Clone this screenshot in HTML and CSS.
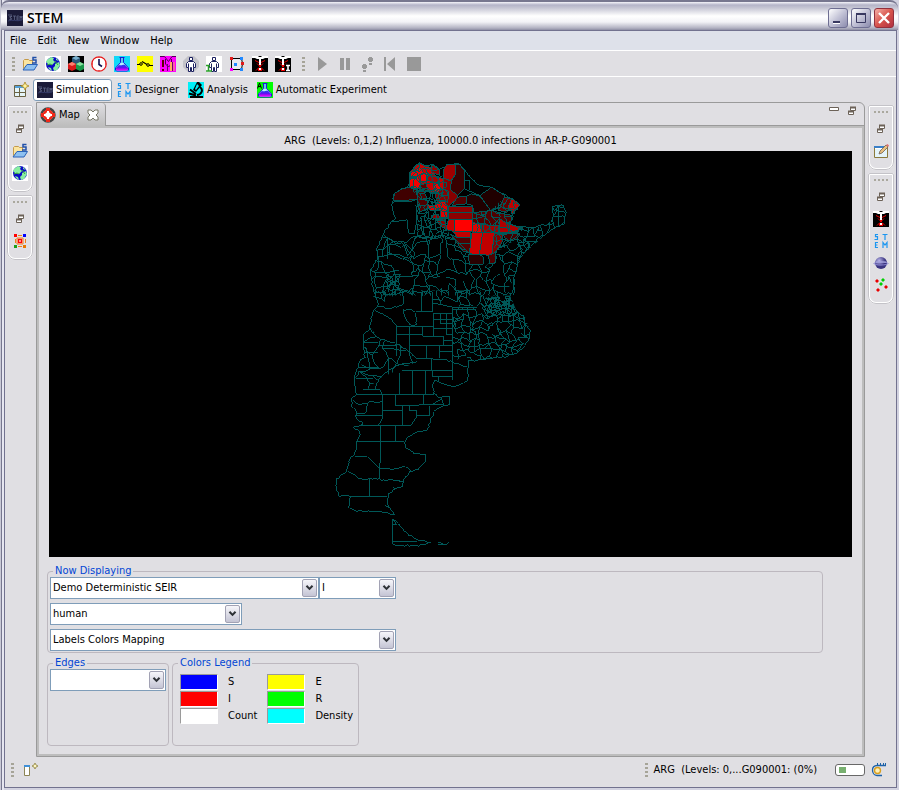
FILE: index.html
```html
<!DOCTYPE html>
<html lang="en">
<head>
<meta charset="utf-8">
<title>STEM</title>
<link rel="stylesheet" href="styles.css">
</head>
<body>
<svg class="defs" aria-hidden="true">
  <defs>
    <linearGradient id="flaskFill" x1="0" y1="0" x2="0" y2="1"><stop offset="0" stop-color="#2040f0"/><stop offset=".5" stop-color="#6010f0"/><stop offset="1" stop-color="#f0f"/></linearGradient>
    <radialGradient id="orb" cx=".35" cy=".3"><stop offset="0" stop-color="#b8b4e8"/><stop offset="1" stop-color="#3a3480"/></radialGradient>
    <symbol id="i-stem" viewBox="0 0 16 16"><rect width="16" height="16" fill="#1b1b38"/><path d="M1 5h4M2 7l3-1-2 2 2 1-3 1M6 6h3M7.500 6v4M10 6v4M10 6h2M10 8h2M10 10h2M13 10V6l1 2 1-2v4" stroke="#687090" stroke-width=".7" fill="none"/><path d="M1 11c4-2 9 1 14-1" stroke="#343a68" fill="none"/></symbol>
    <symbol id="i-open" viewBox="0 0 16 16"><path d="M1.500 12.500v-8l1-1h4l1 1h3v8z" fill="#fbe5a0" stroke="#c49a4a"/><path d="M1 14l4-5.500h10.500L12 14z" fill="#8dc0f0" stroke="#2a62b8"/><path d="M14.500 1.500h-3.500v2.500h3v3h-4" fill="none" stroke="#2050a8" stroke-width="1.500"/></symbol>
    <symbol id="i-globe" viewBox="0 0 16 16"><rect width="16" height="16" fill="#fff"/><circle cx="8" cy="8" r="7" fill="#0a0ac8"/><path d="M2 4l4-3 3 1-1 2 2 2-3 3-4-1-2-2zM10 8l4-2 1 3-3 5-3 1-1-3 2-2zM3 11l3 1 1 3-3-2zM11 2l3 3-3-1z" fill="#88eea0"/><path d="M2 9l3-1 2 1M10 5l3 4" stroke="#38a838" fill="none"/></symbol>
    <symbol id="i-cubes" viewBox="0 0 16 16"><rect width="16" height="16" fill="#000"/><path d="M8 0l4 2v5L8 8 4 6V2z" fill="#2b5678"/><path d="M8 0l4 2-4 2-4-2z" fill="#7ab0cc"/><path d="M4 6l4 2v5l-4 2-4-2V8z" fill="#d81818"/><path d="M4 6l4 2-4 2-4-2z" fill="#ff8070"/><path d="M12 6l4 2v5l-4 2-4-2V8z" fill="#189848"/><path d="M12 6l4 2-4 2-4-2z" fill="#88e0a0"/></symbol>
    <symbol id="i-clock" viewBox="0 0 16 16"><circle cx="8" cy="8" r="7.200" fill="#fff" stroke="#e81818" stroke-width="1.300"/><path d="M8 3v5.500l3 2" stroke="#101050" stroke-width="1.600" fill="none"/><path d="M8 1v1M8 14v1M1 8h1M14 8h1" stroke="#e81818"/></symbol>
    <symbol id="i-flaskshape" viewBox="0 0 16 16"><path d="M5.500 1.500h5M6.500 1v5.500l-5 5.500v2l1 1h11l1-1v-2l-5-5.500V1" fill="#b8f0ff" stroke="#1818d8"/><path d="M5 9c3 1 4-1 6 0l3 3v1.500l-1 1H3l-1-1V12z" fill="url(#flaskFill)"/><path d="M7 2h2v5H7z" fill="#60c8e8"/></symbol>
    <symbol id="i-flask" viewBox="0 0 16 16"><rect width="16" height="16" fill="#10d8f8"/><use href="#i-flaskshape"/></symbol>
    <symbol id="i-auto" viewBox="0 0 16 16"><rect width="16" height="16" fill="#0f0"/><use href="#i-flaskshape"/><path d="M0.500 6.500l2-5.500 2 5.500M1 4.500h3" stroke="#000" fill="none"/></symbol>
    <symbol id="i-switch" viewBox="0 0 16 16"><rect width="16" height="16" fill="#ff0"/><path d="M0 8.500h3M12 9.500h4M5 5.500l5 3" stroke="#000" stroke-width="1.200"/><circle cx="4" cy="8" r="1.300" fill="none" stroke="#000"/><circle cx="11" cy="9" r="1.300" fill="none" stroke="#000"/></symbol>
    <symbol id="i-modifier" viewBox="0 0 16 16"><rect width="16" height="16" fill="#f0f"/><path d="M0 .5h4.500l4 5 3.500-5h4M5.500 3v5l3 3 3-3V3" fill="none" stroke="#500050"/><path d="M2 4h2v7H2zM2 13h2v2H2z" fill="#600000"/><path d="M7.500 15V8M12.500 15V6" stroke="#700070"/><path d="M10 6h2v9h-2zM13.500 6h1v9h-1z" fill="#ffb060"/></symbol>
    <symbol id="i-manshape" viewBox="0 0 16 16"><path d="M6.500 1.500h3v3h-3zM5.500 5.500h5l2 2v4h-2v4h-2v-4h-1v4h-2v-4h-2v-4z" fill="#fff" stroke="#1c2060"/><path d="M5.500 7.500v4M10.500 7.500v4" stroke="#1c2060"/></symbol>
    <symbol id="i-man" viewBox="0 0 16 16"><path d="M5 0h6l5 5v6l-5 5H5l-5-5V5z" fill="#c3c3c9"/><use href="#i-manshape"/></symbol>
    <symbol id="i-maninf" viewBox="0 0 16 16"><rect width="16" height="16" fill="#fff"/><use href="#i-manshape"/><path d="M0 9.500h4M2.500 9v6M0 15h6" stroke="#28a028" stroke-width="1.500"/></symbol>
    <symbol id="i-graph" viewBox="0 0 16 16"><path d="M2.500 2.500h10l1 5-1 6h-10z" fill="#e8e8ee" stroke="#000"/><path d="M1 1h3v3H1zM12 6h3v3h-3z" fill="#e01818"/><path d="M11 1h3v3h-3zM5 7h3v3H5zM11 12h3v3h-3z" fill="#2088ff"/><path d="M1 12h3v3H1z" fill="#f0f"/></symbol>
    <symbol id="i-mosq" viewBox="0 0 16 16"><rect width="16" height="16" fill="#000"/><path d="M0 0h6l1 1h2l1-1h6v2h-3l-2 1H9v7H7V3H5L3 2H0z" fill="#fff"/><path d="M3 4.500l4 2M13 4.500l-4 2M5 7.500l3 3 3-3M4 14.500l3-3M12 14.500l-3-3" stroke="#e80000" fill="none"/><path d="M7 9h2v2H7zM6 12h4v3H6z" fill="#e80000"/><path d="M7 12h2v2H7z" fill="#fff"/></symbol>
    <symbol id="i-mosqi" viewBox="0 0 16 16"><use href="#i-mosq"/><path d="M10 8h6v8h-6z" fill="#000"/><path d="M11 9.500h4M13 9v6M11 14.500h4" stroke="#fff" stroke-width="1.600"/></symbol>
    <symbol id="i-letters" viewBox="0 0 16 16"><path d="M5 1.500H2.500v2.200h2v2.800H1.500M9.500 1.500h5M12 1.500v5.500M5 9.500H2.500v5H5M2.500 12h2M10 15V9.500l2 2.500 2-2.500V15" fill="none" stroke="#1c96f0" stroke-width="1.200"/></symbol>
    <symbol id="i-scope" viewBox="0 0 16 16"><rect width="16" height="16" fill="#00f0f8"/><path d="M9 0h2l3 3-6 7-3-2z" fill="#000"/><path d="M9 2l2 2-3 4-1-1z" fill="#00f0f8"/><path d="M12 5c4 3 1 8-3 8M2 7.500l6 4.500M1 11.500l7 2M2 15h13" stroke="#000" stroke-width="2" fill="none"/></symbol>
    <symbol id="i-persp" viewBox="0 0 16 16"><path d="M1.500 3.500h11v11h-11z" fill="#e4f4f8" stroke="#6b6344"/><path d="M2 5h10" stroke="#54a0d8" stroke-width="2"/><path d="M6.500 6v8M2 10.500h10" stroke="#6b6344"/><path d="M12 0l1.200 2.800L16 4l-2.800 1.200L12 8l-1.200-2.800L8 4l2.800-1.200z" fill="#fff4a0" stroke="#a88420" stroke-width=".8"/></symbol>
    <symbol id="i-restore" viewBox="0 0 10 10"><path d="M3.500 1.500h5v3h-5zM1.500 5.500h5v3h-5z" fill="#fff" stroke="#6c6258"/><path d="M3 1.500h6M1 5.500h6" stroke="#6c6258" stroke-width="2"/></symbol>
    <symbol id="i-target" viewBox="0 0 16 16"><circle cx="8" cy="8" r="6.500" fill="none" stroke="#444" stroke-width="2.400"/><circle cx="8" cy="8" r="5.400" fill="#f02818"/><path d="M6 1h4v3H6zM6 12h4v3H6zM1 6h3v4H1zM12 6h3v4h-3z" fill="#f02818"/><path d="M8 4v8M4 8h8" stroke="#fff" stroke-width="2"/><circle cx="8" cy="8" r="2.800" fill="#fff"/></symbol>
    <symbol id="i-nodes" viewBox="0 0 16 16"><path d="M6 2.500h4M6 13.500h4M3.500 6v4M13.500 6v4" stroke="#f08018"/><path d="M5 5h6v6H5z" fill="#fff" stroke="#f08018"/><path d="M6.500 6.500h3v3h-3z" fill="#fff" stroke="#f00" stroke-width="1.500"/><path d="M2 1h3v3H2z" fill="#f00"/><path d="M11 1h3v3h-3z" fill="#00f"/><path d="M2 12h3v3H2z" fill="#18a018"/><path d="M11 12h3v3h-3z" fill="#e87800"/></symbol>
    <symbol id="i-edit" viewBox="0 0 16 16"><path d="M1.500 3.500h13v11h-13z" fill="#fff" stroke="#8a7a3c"/><path d="M1 4h13" stroke="#3a80c8" stroke-width="2"/><path d="M2 6h12v8H2z" fill="#e4f4fa"/><path d="M6 11l1-3 6-6 2 2-6 6z" fill="#e8c080" stroke="#706050" stroke-width=".8"/><path d="M13 2l1.500-1L16 2.500 15 4z" fill="#e07070"/></symbol>
    <symbol id="i-planet" viewBox="0 0 16 16"><circle cx="8" cy="8" r="6" fill="url(#orb)"/><ellipse cx="8" cy="8.500" rx="7" ry="1.500" fill="none" stroke="#8884d0"/><path d="M3 7h10" stroke="#c0c0f0" stroke-width=".8"/></symbol>
    <symbol id="i-scatter" viewBox="0 0 16 16"><g fill="#e80000"><path d="M4 2l2 2-2 2-2-2zM13 8l2 2-2 2-2-2zM5 11l2 2-2 2-2-2z"/></g><path d="M10 1l2 2-2 2-2-2zM8 5l2 2-2 2-2-2z" fill="#00d000"/></symbol>
    <symbol id="i-fast" viewBox="0 0 16 16"><path d="M1.500 3.500h5v10h-5z" fill="#fff" stroke="#8c8454"/><path d="M1 4h6" stroke="#4090d8" stroke-width="2"/><path d="M12 1l1 2 2 1-2 1-1 2-1-2-2-1 2-1z" fill="#fff8c0" stroke="#8c8040" stroke-width=".8"/></symbol>
    <symbol id="i-job" viewBox="0 0 16 16"><path d="M15 3.500H6c-3 0-4.500 2-4.500 4.500S3 13.500 6 13.500h5" fill="none" stroke="#1d62a8" stroke-width="1.300"/><path d="M6.500 3V1M9.500 3V1M12.500 3V1M14.500 3V1" stroke="#1d62a8"/><circle cx="6.500" cy="8.500" r="3" fill="#fff0b8" stroke="#d8a020" stroke-width="1.400"/></symbol>
    <symbol id="i-chevron" viewBox="0 0 15 18"><path d="M4 6.500l3.500 3.500 3.500-3.500" fill="none" stroke="#2f3338" stroke-width="2.400"/></symbol>
  </defs>
</svg>

<div class="window">
  <header class="titlebar">
    <svg class="icon"><use href="#i-stem"/></svg>
    <h1>STEM</h1>
    <div class="window-buttons">
      <button type="button" class="wbtn" aria-label="Minimize"><svg viewBox="0 0 18 18"><path d="M4 12h7v3H4z" fill="#fff"/><path d="M4 12h7v2H4z" fill="#383860"/></svg></button>
      <button type="button" class="wbtn" aria-label="Maximize"><svg viewBox="0 0 18 18"><path d="M4.500 4.500h9v9h-9z" fill="none" stroke="#383860"/><path d="M4 5h10" stroke="#383860" stroke-width="2"/></svg></button>
      <button type="button" class="wbtn close" aria-label="Close"><svg viewBox="0 0 18 18"><path d="M4 4l10 10M14 4L4 14" stroke="#fff" stroke-width="2.400"/></svg></button>
    </div>
  </header>

  <div class="client">
    <nav class="menubar">
      <button type="button">File</button><button type="button">Edit</button><button type="button">New</button><button type="button">Window</button><button type="button">Help</button>
    </nav>

    <div class="toolbar">
      <i class="grip"></i>
      <button type="button" aria-label="Open scenario"><svg class="icon"><use href="#i-open"/></svg></button>
      <button type="button" aria-label="Model"><svg class="icon"><use href="#i-globe"/></svg></button>
      <button type="button" aria-label="Graph"><svg class="icon"><use href="#i-cubes"/></svg></button>
      <button type="button" aria-label="Sequencer"><svg class="icon"><use href="#i-clock"/></svg></button>
      <button type="button" aria-label="Experiment"><svg class="icon"><use href="#i-flask"/></svg></button>
      <button type="button" aria-label="Trigger"><svg class="icon"><use href="#i-switch"/></svg></button>
      <button type="button" aria-label="Modifier"><svg class="icon"><use href="#i-modifier"/></svg></button>
      <button type="button" aria-label="Population"><svg class="icon"><use href="#i-man"/></svg></button>
      <button type="button" aria-label="Population initializer"><svg class="icon"><use href="#i-maninf"/></svg></button>
      <button type="button" aria-label="Migration"><svg class="icon"><use href="#i-graph"/></svg></button>
      <button type="button" aria-label="Disease"><svg class="icon"><use href="#i-mosq"/></svg></button>
      <button type="button" aria-label="Infector"><svg class="icon"><use href="#i-mosqi"/></svg></button>
      <i class="grip second"></i>
      <button type="button" aria-label="Run" disabled><svg class="icon" viewBox="0 0 16 16"><path d="M4 1l9 7-9 7z" fill="#999"/></svg></button>
      <button type="button" aria-label="Pause" disabled><svg class="icon" viewBox="0 0 16 16"><path d="M3 2h4v12H3zM9 2h4v12H9z" fill="#999"/></svg></button>
      <button type="button" aria-label="Step" disabled><svg class="icon" viewBox="0 0 16 16"><path d="M3 8h3v1h1v3H6v1H3v-1H2V9h1zM3 14h3v2H3zM9 1h3v1h1v3h-1v1H9V5H8V2h1zM9 7h3v2H9z" fill="#999"/></svg></button>
      <button type="button" aria-label="Reset" disabled><svg class="icon" viewBox="0 0 16 16"><path d="M1 1h2v14H1zM12 1v14L4 8z" fill="#999"/></svg></button>
      <button type="button" aria-label="Stop" disabled><svg class="icon" viewBox="0 0 16 16"><path d="M1 1h14v14H1z" fill="#999"/></svg></button>
    </div>

    <div class="perspectives">
      <button type="button" class="open-persp" aria-label="Open perspective"><svg class="icon"><use href="#i-persp"/></svg></button>
      <button type="button" class="persp active"><svg class="icon"><use href="#i-stem"/></svg>Simulation</button>
      <button type="button" class="persp"><svg class="icon"><use href="#i-letters"/></svg>Designer</button>
      <button type="button" class="persp"><svg class="icon"><use href="#i-scope"/></svg>Analysis</button>
      <button type="button" class="persp"><svg class="icon"><use href="#i-auto"/></svg>Automatic Experiment</button>
    </div>

    <div class="workbench">
      <aside class="trim">
        <div class="stack">
          <i class="dots"></i>
          <button type="button" aria-label="Restore"><svg class="small"><use href="#i-restore"/></svg></button>
          <button type="button" aria-label="Scenarios"><svg class="icon"><use href="#i-open"/></svg></button>
          <button type="button" aria-label="Models"><svg class="icon"><use href="#i-globe"/></svg></button>
        </div>
        <div class="stack">
          <i class="dots"></i>
          <button type="button" aria-label="Restore"><svg class="small"><use href="#i-restore"/></svg></button>
          <button type="button" aria-label="Graphs"><svg class="icon"><use href="#i-nodes"/></svg></button>
        </div>
      </aside>

      <main class="view">
        <div class="tabs">
          <div class="tab"><svg class="icon"><use href="#i-target"/></svg><span>Map</span>
            <button type="button" aria-label="Close Map"><svg class="tab-close" viewBox="0 0 12 12"><path d="M1 1h3l2 2 2-2h3v3L9 6l2 2v3H8L6 9l-2 2H1V8l2-2-2-2z" fill="#fff" stroke="#777766"/></svg></button>
          </div>
          <div class="tab-tools">
            <button type="button" aria-label="Minimize view"><svg class="small" viewBox="0 0 10 10"><path d="M.5 1.500h9v3h-9z" fill="#fff" stroke="#6c6258"/></svg></button>
            <button type="button" aria-label="Restore view"><svg class="small"><use href="#i-restore"/></svg></button>
          </div>
        </div>
        <div class="view-body">
          <h2>ARG&nbsp; (Levels: 0,1,2) Influenza, 10000.0 infections in AR-P-G090001</h2>
          <div class="canvas">
            <svg viewBox="49 151 803 405" role="img" aria-label="Infection map of Argentina" shape-rendering="crispEdges">
              <defs>
                <clipPath id="north"><path d="M165 420L155 370 150 350 165 318 175 315 170 280 188 245 192 235 210 200 228 190 262 193 270 160 290 150 300 130 268 95 270 50 300 22 358 42 372 70 395 80 410 125 385 150 385 190 375 215 400 250 445 290 450 325 500 330 545 280 600 245 600 215 640 218 680 208 700 190 698 150 730 150 738 175 730 205 690 225 600 305 582 370 552 420z"/></clipPath>
                <clipPath id="northEast"><path d="M457 172L512 165 553 125 600 147 580 175 562 205 610 218 600 240 550 280 523 285 523 232 457 232z"/></clipPath>
                <clipPath id="centre"><path d="M120 60L552 60 540 105 370 108 308 95 300 65 270 80 240 60 200 70 145 105z"/></clipPath>
                <clipPath id="pampas"><path d="M368 110H440L470 80 540 75 560 122 585 140 600 180 598 205 560 248 480 265 415 272 368 265z"/></clipPath>
                <clipPath id="andes"><path d="M100 180L125 175 145 205 210 225 240 245 258 275 145 325 100 370 75 370 72 330 105 260z"/></clipPath>
              </defs>
              <g transform="translate(320 155) scale(.333333)">
                <g>
                  <path fill="#c80000" d="M268 95L270 50 285 32 300 22 318 32 340 38 345 60 370 70 375 100 355 118 320 105 300 100z"/>
                  <path fill="#f00000" d="M272 52L300 36 312 52 290 62 270 64z"/>
                  <path fill="#f00000" d="M268 95L268 68 295 64 302 84 294 100z"/>
                  <path fill="#f00000" d="M302 56L322 52 318 78 300 80z"/>
                  <path fill="#900000" d="M335 28L358 42 360 60 335 50z"/>
                  <path fill="#a80000" d="M325 55L345 58 360 78 340 82 322 72z"/>
                  <path fill="#600000" d="M300 88L318 84 325 105 305 108z"/>
                  <path fill="#f00000" d="M340 88L358 82 362 108 345 112z"/>
                  <path fill="#a00000" d="M372 40L380 27H405L408 55 392 75 370 68z"/>
                  <path fill="#380000" d="M405 27H418L433 45V100L412 120 390 100 395 75 408 55z"/>
                  <path fill="#880000" d="M370 68L395 77 390 100 412 120V130L385 152 350 138 345 115 372 98z"/>
                  <path fill="#400000" d="M222 115L245 100 265 95 290 103 292 132 270 138 220 135z"/>
                  <path fill="#500000" d="M292 105L310 105 320 125 325 160 300 168 292 150z"/>
                  <path fill="#e00000" d="M322 148L345 150 350 140 375 138 385 158 383 188 360 186 362 165 330 165z"/>
                  <path fill="#900000" d="M336 180L355 175 360 192 340 190z"/>
                  <path fill="#880000" d="M350 192L375 190 380 225 355 205z"/>
                  <path fill="#8c0000" d="M385 152H457V192H385z"/><path d="M385 172H457"/>
                  <path fill="#ff0000" d="M403 192H457V228H403z"/>
                  <path fill="#c80000" d="M385 192H403V228L378 222z"/>
                  <path fill="#c00000" d="M400 228H453V245H410z"/>
                  <path fill="#500000" d="M392 237L410 245H453L450 292 430 288z"/><path d="M410 265H450"/>
                  <path fill="#e00000" d="M457 200L480 205 485 232H457z"/>
                  <path fill="#a00000" d="M484 208H535V232H484z"/>
                  <path fill="#d00000" d="M455 232H488L478 297 448 295z"/>
                  <path fill="#c00000" d="M488 232H523L515 300 478 297z"/>
                  <path fill="#800000" d="M523 235H548V258L530 285 515 300z"/>
                  <path fill="#280000" d="M445 297L478 297 490 305 490 327H448z"/>
                  <path fill="#500000" d="M505 300L528 290V322L510 325z"/>
                  <path fill="#500000" d="M412 125L440 122V145L395 150z"/>
                  <path fill="#200000" d="M440 122L455 115 480 122 512 165 462 172 457 150 440 145z"/>
                  <path fill="#200000" d="M480 120L515 95 553 120 550 140 530 160 512 165z"/>
                  <path fill="#600000" d="M553 125L575 130 570 155 560 170 535 165z"/>
                  <path fill="#c00000" d="M565 155L575 128 600 147 578 175z"/>
                  <path fill="#500000" d="M457 172L512 165 575 180 575 195 545 210 484 208 457 200z"/>
                  <path fill="#b00000" d="M540 190L562 205 608 217 580 232 540 232z"/>
                  <path fill="#400000" d="M548 235H600L590 252 560 258z"/>
                </g>
                <path d="M433 45V75H450V103M433 100L480 120M218 140L295 130M210 200L262 193 265 232 283 235 290 200 288 150M203 245V310M203 290L245 310M457 150V232M392 237L445 290"/>
                <path class="coast" d="M165 420L155 370 150 350 165 318 175 315 170 280 188 245 192 235 210 200 228 190 218 175 217 140 222 115 245 100 265 95 268 75 270 50 285 32 300 22 315 30 340 28 358 42 372 35 380 27 418 27 435 45 450 65 480 90 515 95 540 110 575 130 600 147 580 175 575 195 562 205 600 215 640 215 680 208 700 190 698 150 730 150 738 175 730 205 690 225 660 245 640 265 600 305 590 340 582 370 582 420"/>
                <path class="coast" d="M600 215L590 245 560 260 530 285 528 320 505 340"/>
                <path class="coast" d="M192 240L230 265 250 262 262 300 290 262 330 255 360 240 400 250"/>
                <path class="mesh" clip-path="url(#north)" data-box="145 250 620 425" data-step="24"/>
                <path class="mesh" clip-path="url(#north)" data-box="290 100 385 240" data-step="12"/>
                <path class="mesh" clip-path="url(#north)" data-box="265 20 375 100" data-step="19"/>
                <path class="mesh" clip-path="url(#north)" data-box="600 140 750 310" data-step="17"/>
                <path class="mesh" clip-path="url(#northEast)" data-box="455 120 615 285" data-step="17"/>
                <path class="mesh" clip-path="url(#north)" data-box="200 360 230 420" data-step="10"/>
              </g>
              <g transform="translate(330 270) scale(.333333)">
                <path class="mesh" clip-path="url(#centre)" data-box="120 60 560 110" data-step="25"/>
                <path class="mesh" clip-path="url(#pampas)" data-box="365 70 610 275" data-step="17"/>
                <path class="mesh" clip-path="url(#pampas)" data-box="470 75 550 130" data-step="10"/>
                <path class="mesh" clip-path="url(#andes)" data-box="70 175 260 375" data-step="34"/>
                <path class="coast" d="M135 75L145 100 132 120 125 140 120 175 105 185 98 215 105 260 90 268 85 290 75 310 72 330 78 370"/>
                <path class="coast" d="M552 20L548 60 540 75 538 105 560 122 582 140 585 160 600 180 598 205 580 230 560 248 530 258 480 265 440 270 415 272 412 330 400 340 375 347 340 342 315 330 308 345 312 370"/>
                <path class="coast" d="M132 120L185 145 200 167"/>
                <path class="coast" d="M122 175L145 205 205 222 240 245 258 262 305 264 350 268 410 290"/>
                <path class="coast" d="M220 120L245 115 258 130 258 163 242 165 225 145 220 120"/>
                <path class="coast" d="M145 105L175 115 220 103 220 65"/>
                <path class="coast" d="M258 275L200 285 145 325 135 355"/>
                <path d="M368 110V330M368 110H440M275 65V122M258 122H308V65M308 97L368 110M308 130H368M310 130V197H342V225H368M333 130V160H368M350 130V193H368M310 148H368M310 175H368M342 210H368M200 167H310M200 167V258M200 193H278M239 167V245M278 167V198L310 199M239 226H368M145 226H200M290 226V262M329 226V262M329 243H368M304 264V302M215 301H368M308 302V319H368M325 319V332M208 308V372M248 302V372M287 302V372M78 373H312M100 357H150L158 373M98 215H145M105 247H145M85 290H145M78 325H130"/>
              </g>
              <g transform="translate(320 380) scale(.333333)">
                <path class="coast" d="M108 42L95 55 97 80 110 90 105 110 128 130 98 143 115 150 122 160 110 185 105 220 88 235 82 270 50 295 47 325 60 348 90 345 88 380 105 392 175 392 225 402"/>
                <path class="coast" d="M342 40L360 52 388 45 390 72 360 78 340 95 333 120 322 150 290 155 268 165 252 185 260 205 285 220 315 222 315 245 300 262 275 272 255 290 248 315 220 328 203 345 200 370 210 385 225 402"/>
                <path class="coast" d="M97 60L120 75 150 65 188 65"/>
                <path class="coast" d="M110 100L135 100 145 70"/>
                <path class="coast" d="M178 265L235 265 255 257 275 272"/>
                <path class="coast" d="M82 270L120 295 178 296 250 303"/>
                <path class="coast" d="M218 415L232 428 255 455 290 478 335 487 290 497 218 492"/>
                <path class="coast" d="M352 490L362 487 372 491 386 487"/>
                <path d="M188 42V112L175 135M188 91H248M226 42V76H292L300 72H368M310 42V72M248 76V135M105 106H188M118 136H272L290 108M268 76V91H290V106H328V76M181 136V225L178 296M226 136V184M108 184H252M104 229H142L178 265M148 296V347M90 347H200M218 415V492M218 482H290M340 70L365 55 372 75M195 375L208 382M220 320L225 328M218 415L230 432 220 432M355 492H380"/>
              </g>
            </svg>
          </div>

          <fieldset class="display">
            <legend>Now Displaying</legend>
            <div class="row">
              <span class="combo wide"><select aria-label="Decorator"><option>Demo Deterministic SEIR</option></select><svg><use href="#i-chevron"/></svg></span><span class="combo narrow"><select aria-label="Compartment"><option>I</option></select><svg><use href="#i-chevron"/></svg></span>
            </div>
            <div class="row"><span class="combo medium"><select aria-label="Population"><option>human</option></select><svg><use href="#i-chevron"/></svg></span></div>
            <div class="row"><span class="combo full"><select aria-label="Color provider"><option>Labels Colors Mapping</option></select><svg><use href="#i-chevron"/></svg></span></div>
          </fieldset>

          <div class="groups">
            <fieldset class="edges">
              <legend>Edges</legend>
              <span class="combo"><select aria-label="Edges"><option></option></select><svg><use href="#i-chevron"/></svg></span>
            </fieldset>
            <fieldset>
              <legend>Colors Legend</legend>
              <div class="swatches">
                <i class="swatch blue"></i><span>S</span><i class="swatch yellow"></i><span>E</span>
                <i class="swatch red"></i><span>I</span><i class="swatch green"></i><span>R</span>
                <i class="swatch white"></i><span>Count</span><i class="swatch cyan"></i><span>Density</span>
              </div>
            </fieldset>
          </div>
        </div>
      </main>

      <aside class="trim">
        <div class="stack">
          <i class="dots"></i>
          <button type="button" aria-label="Restore"><svg class="small"><use href="#i-restore"/></svg></button>
          <button type="button" aria-label="Editor"><svg class="icon"><use href="#i-edit"/></svg></button>
        </div>
        <div class="stack">
          <i class="dots"></i>
          <button type="button" aria-label="Restore"><svg class="small"><use href="#i-restore"/></svg></button>
          <button type="button" aria-label="Diseases"><svg class="icon"><use href="#i-mosq"/></svg></button>
          <button type="button" aria-label="Designer view"><svg class="icon"><use href="#i-letters"/></svg></button>
          <button type="button" aria-label="World"><svg class="icon"><use href="#i-planet"/></svg></button>
          <button type="button" aria-label="Phase space"><svg class="icon"><use href="#i-scatter"/></svg></button>
        </div>
      </aside>
    </div>

    <footer class="status">
      <i class="grip"></i>
      <button type="button" aria-label="Fast view"><svg class="icon"><use href="#i-fast"/></svg></button>
      <div class="job">
        <i class="grip"></i>
        <span>ARG&nbsp; (Levels: 0,...G090001: (0%)</span>
        <div class="progress"><i></i></div>
        <button type="button" aria-label="Show jobs"><svg class="icon"><use href="#i-job"/></svg></button>
      </div>
    </footer>
  </div>
</div>
<script src="map.js"></script>
</body>
</html>
```

FILE: styles.css
```css
* { box-sizing: border-box; }

body {
  margin: 0;
  background: #c9c9d6;
  color: #000;
  font: 11px/14px "DejaVu Sans Condensed", "DejaVu Sans", sans-serif;
}

.defs { position: absolute; width: 0; height: 0; }
h1, h2 { margin: 0; }
svg { display: block; }

button {
  display: flex;
  align-items: center;
  justify-content: center;
  margin: 0;
  padding: 0;
  border: 0;
  background: none;
  color: inherit;
  font: inherit;
}

.icon { width: 16px; height: 16px; flex: none; }
.small { width: 10px; height: 10px; flex: none; }

/* window frame */
.window {
  display: flex;
  flex-direction: column;
  min-height: 100vh;
  padding: 0 2px 2px 4px;
  background: linear-gradient(90deg, #c9c9d6 1px, #77778f 1px 2px, #e6e6f0 2px 4px, #d2d2e0 4px);
}

.titlebar {
  display: flex;
  align-items: center;
  gap: 4px;
  height: 30px;
  margin: 0 -1px 0 -3px;
  padding: 4px 4px 0 6px;
  border-top: 2px solid #77778f;
  border-radius: 8px 8px 0 0;
  background: linear-gradient(#f4f4fa 0, #b4b4c8 3px, #c6c6d4 6px, #fff 14px, #f2f2f6 20px, #b2b2c2 26px, #8e8ea4 28px);
}

.titlebar h1 { font: 600 14px/18px "Open Sans", sans-serif; }
.window-buttons { display: flex; gap: 3px; margin-left: auto; }

.wbtn {
  width: 20px;
  height: 20px;
  border: 1px solid #6e6e92;
  border-radius: 3px;
  background: linear-gradient(135deg, #fff, #c2c2d6 50%, #8c8cae);
}
.wbtn svg { width: 18px; height: 18px; }
.wbtn.close { border-color: #93303c; background: linear-gradient(135deg, #f4b0a8, #d8544c 50%, #b03040); }

.client {
  display: flex;
  flex: 1;
  flex-direction: column;
  border: 1px solid #72728f;
  background: #e0dfe3;
}

.menubar {
  display: flex;
  gap: 11px;
  height: 20px;
  padding: 0 5px;
  border-bottom: 1px solid #fff;
  background: #dee1ea;
}

/* tool bars */
.toolbar {
  display: flex;
  align-items: center;
  gap: 7px;
  height: 26px;
  padding-left: 7px;
  border-bottom: 1px solid #fff;
}
.grip {
  width: 3px;
  height: 14px;
  flex: none;
  background: repeating-linear-gradient(#a6a498 0 2px, transparent 2px 4px);
}
.toolbar .second { margin: 0 2px 0 4px; }

.perspectives { display: flex; align-items: center; gap: 4px; height: 25px; padding-left: 8px; }
.persp { gap: 3px; height: 22px; padding-right: 5px; }
.persp.active {
  padding: 0 2px 0 3px;
  border: 1px solid #7f9db9;
  border-radius: 3px;
  background: #fff;
}

/* workbench */
.workbench { display: flex; flex: 1; gap: 3px; padding: 0 2px; }
.trim { display: flex; flex: none; flex-direction: column; gap: 3px; padding-top: 3px; }
.stack {
  display: flex;
  flex-direction: column;
  align-items: center;
  gap: 6px;
  width: 26px;
  padding: 4px 0 9px;
  border: 2px solid #fff;
  border-radius: 2px 2px 8px 8px;
  outline: 1px solid #c4c3c8;
  outline-offset: -1px;
}
.stack button { height: 16px; }
.dots { width: 14px; height: 2px; margin-bottom: 2px; background: repeating-linear-gradient(90deg, #aaa89e 0 2px, transparent 2px 4px); }

.view {
  display: flex;
  flex: 1;
  flex-direction: column;
  min-width: 0;
  border: 1px solid #9a9a9a;
  border-radius: 0 6px 0 0;
}
.tabs { display: flex; justify-content: space-between; height: 23px; border-bottom: 1px solid #9a9a9a; }
.tab {
  display: flex;
  align-items: center;
  gap: 3px;
  height: 23px;
  padding: 0 6px 0 3px;
  border-right: 1px solid #9a9a9a;
  border-radius: 0 4px 0 0;
  background: linear-gradient(#e0dfe3, #bdbdbd);
}
.tab-close { width: 12px; height: 12px; margin-left: 4px; }
.tab-tools { display: flex; gap: 8px; padding: 3px 7px 0 0; align-items: flex-start; }

.view-body {
  display: flex;
  flex: 1;
  flex-direction: column;
  padding: 6px 8px 8px;
  border: 2px solid #bdbdbd;
}
.view-body h2 { margin-bottom: 3px; font: inherit; text-align: center; }
.canvas { flex: 1; margin: 0 2px 8px; background: #000; }
.canvas svg { width: 100%; height: 100%; fill: none; stroke: #005858; stroke-width: 3px; }

fieldset {
  min-width: 0;
  margin: 0;
  padding: 0 2px 1px;
  border: 1px solid #bdb8bf;
  border-radius: 4px;
}
legend { margin-left: 3px; padding: 0 2px; color: #0046d5; line-height: 12px; }

.display { display: flex; flex-direction: column; margin-right: 31px; }
.row { display: flex; margin-bottom: 4px; }
.row:last-child { margin-bottom: 0; }

.combo { position: relative; display: block; }
.combo select {
  display: block;
  width: 100%;
  height: 22px;
  padding: 0 18px 0 2px;
  border: 1px solid #7f9db9;
  border-radius: 0;
  appearance: none;
  background: #fff;
  color: #000;
  font: inherit;
}
.combo svg {
  position: absolute;
  top: 2px;
  right: 2px;
  width: 15px;
  height: 18px;
  border: 1px solid #a2a2b4;
  border-radius: 2px;
  background: linear-gradient(#f6f6fa, #c4c4d4);
  pointer-events: none;
}
.wide { width: 269px; }
.narrow { width: 77px; }
.medium { width: 192px; }
.full { width: 346px; }

.groups { display: flex; gap: 3px; margin-top: 4px; }
.edges { width: 122px; }
.swatches {
  display: grid;
  grid-template-columns: 38px auto 38px auto;
  column-gap: 10px;
  row-gap: 1px;
  align-items: center;
  padding: 5px 3px 20px 5px;
}
.swatch { height: 16px; border: 1px solid; border-color: #9a9a9a #fff #fff #9a9a9a; }
.blue { background: #00f; }
.yellow { background: #ff0; }
.red { background: #f00; }
.green { background: #0f0; }
.white { background: #fff; }
.cyan { background: #0ff; }

/* status line */
.status { display: flex; align-items: center; gap: 9px; height: 30px; padding: 0 9px 4px 6px; }
.job { display: flex; align-items: center; gap: 6px; margin-left: auto; }
.progress { width: 30px; height: 12px; margin-left: 12px; padding: 2px 3px; border: 1px solid #686868; border-radius: 3px; background: #fff; }
.progress i { display: block; width: 7px; height: 6px; background: #78b070; }
```

FILE: map.js
```js
// Repeatable pseudo-random numbers keep the district lines stable.
let seed = 17;
function random() {
  seed = (seed * 1103515245 + 12345) % 2147483648;
  return seed / 2147483648;
}
function jitter(amount) {
  return (random() - 0.5) * 2 * amount;
}

// Irregular district cells over a box, clipped to their region.
document.querySelectorAll(".mesh").forEach((path) => {
  const [x0, y0, x1, y1] = path.dataset.box.split(" ").map(Number);
  const step = Number(path.dataset.step);
  const points = [];
  for (let y = y0; y <= y1 + step; y += step) {
    const row = [];
    for (let x = x0; x <= x1 + step; x += step) {
      row.push([x + jitter(step * 0.55), y + jitter(step * 0.55)]);
    }
    points.push(row);
  }
  let d = "";
  function edge(a, b) {
    if (random() < 0.17) return;
    const mx = (a[0] + b[0]) / 2 + jitter(step * 0.25);
    const my = (a[1] + b[1]) / 2 + jitter(step * 0.25);
    d += `M${a[0]} ${a[1]}L${mx} ${my} ${b[0]} ${b[1]}`;
  }
  points.forEach((row, r) => row.forEach((p, c) => {
    if (row[c + 1]) edge(p, row[c + 1]);
    if (points[r + 1]) edge(p, points[r + 1][c]);
  }));
  path.setAttribute("d", d);
});

// Rivers, ridges and shores wander around their base line.
document.querySelectorAll(".coast").forEach((path) => {
  const length = path.getTotalLength();
  const parts = [];
  for (let at = 0; at < length; at += 7) {
    const p = path.getPointAtLength(at);
    parts.push(`${p.x + jitter(2.5)} ${p.y + jitter(2.5)}`);
  }
  const end = path.getPointAtLength(length);
  parts.push(`${end.x} ${end.y}`);
  path.setAttribute("d", "M" + parts.join("L"));
});
```
